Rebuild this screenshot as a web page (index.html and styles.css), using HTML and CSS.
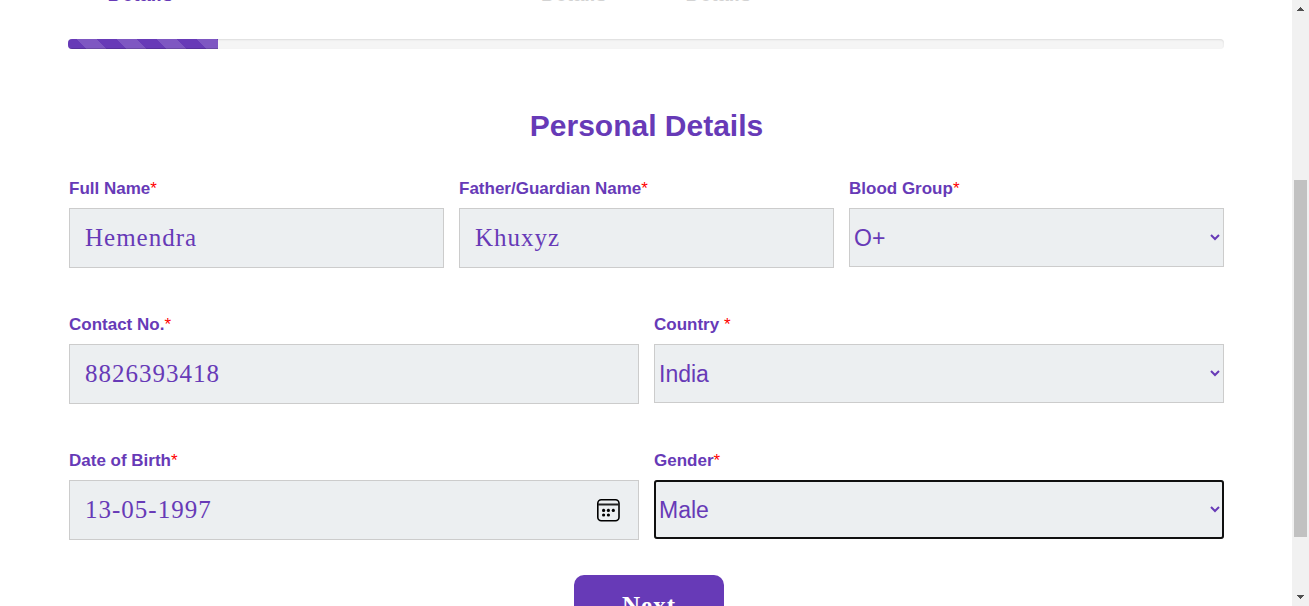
FILE: index.html
```html
<!DOCTYPE html>
<html lang="en">
<head>
<meta charset="utf-8">
<meta name="viewport" content="width=device-width, initial-scale=1">
<title>Personal Details</title>
<link rel="stylesheet" href="styles.css">
</head>
<body>
<div class="viewport">
  <main class="page">
    <ol class="steps">
      <li class="step step-active">Details</li>
      <li class="step"></li>
      <li class="step"></li>
      <li class="step">Details</li>
      <li class="step">Details</li>
      <li class="step"></li>
      <li class="step"></li>
      <li class="step"></li>
    </ol>
    <div class="progress" role="progressbar" aria-label="Form progress" aria-valuenow="13" aria-valuemin="0" aria-valuemax="100">
      <div class="progress-bar" style="width: 13%"></div>
    </div>
    <form class="form">
      <h1 class="title">Personal Details</h1>
      <div class="row row-three">
        <div class="field">
          <label class="label" for="name">Full Name<span class="required">*</span></label>
          <input class="control" id="name" type="text" value="Hemendra">
        </div>
        <div class="field">
          <label class="label" for="guardian">Father/Guardian Name<span class="required">*</span></label>
          <input class="control" id="guardian" type="text" value="Khuxyz">
        </div>
        <div class="field">
          <label class="label" for="blood">Blood Group<span class="required">*</span></label>
          <select class="control select" id="blood"><option>O+</option></select>
        </div>
      </div>
      <div class="row">
        <div class="field">
          <label class="label" for="contact">Contact No.<span class="required">*</span></label>
          <input class="control" id="contact" type="text" value="8826393418">
        </div>
        <div class="field">
          <label class="label" for="country">Country <span class="required">*</span></label>
          <select class="control select" id="country"><option>India</option></select>
        </div>
      </div>
      <div class="row">
        <div class="field">
          <label class="label" for="birth">Date of Birth<span class="required">*</span></label>
          <div class="date">
            <input class="control" id="birth" type="text" value="13-05-1997">
            <button class="picker" type="button" aria-label="Open calendar">
              <svg width="24" height="24" viewBox="0 0 24 24" fill="none" stroke="#000" stroke-width="1.6">
                <rect x="1.8" y="1.8" width="21.2" height="21" rx="3.5"/>
                <path d="M2 6.5h21" stroke="#222" stroke-width="2"/>
                <g fill="#000" stroke="none">
                  <circle cx="7.6" cy="12.4" r="1.6"/><circle cx="12.4" cy="12.4" r="1.6"/><circle cx="17.3" cy="12.4" r="1.6"/>
                  <circle cx="7.6" cy="17" r="1.6"/><circle cx="12.4" cy="17" r="1.6"/>
                </g>
              </svg>
            </button>
          </div>
        </div>
        <div class="field">
          <label class="label" for="gender">Gender<span class="required">*</span></label>
          <select class="control select select-focused" id="gender"><option>Male</option></select>
        </div>
      </div>
      <button class="next" type="button">Next</button>
    </form>
  </main>
  <div class="scrollbar" aria-hidden="true">
    <svg class="arrow" width="7" height="4" viewBox="0 0 7 4" shape-rendering="crispEdges"><path d="M3 0h1v1h1v1h1v1h1v1H0V3h1V2h1V1h1z" fill="#505050"/></svg>
    <div class="track"><div class="thumb"></div></div>
    <svg class="arrow" width="7" height="4" viewBox="0 0 7 4" shape-rendering="crispEdges"><path d="M0 0h7v1H6v1H5v1H4v1H3V3H2V2H1V1H0z" fill="#505050"/></svg>
  </div>
</div>
</body>
</html>
```
FILE: styles.css
```css
* {
  box-sizing: border-box;
}

body {
  margin: 0;
  background: #fff;
  color: #673ab7;
  font-family: "Liberation Sans", Arial, sans-serif;
}

.viewport {
  display: flex;
  height: 100vh;
  overflow: hidden;
}

.page {
  flex: 1;
  min-width: 0;
  padding: 0 68px;
}

/* The step list is scrolled almost out of view. */
.steps {
  display: grid;
  grid-template-columns: repeat(8, 1fr);
  height: 24px;
  margin: -18px 0 33px;
  padding: 0;
  list-style: none;
  font-size: 20px;
  font-weight: bold;
  line-height: 24px;
  text-align: center;
}

.step {
  color: #d3d3d3;
}

.step-active {
  color: #673ab7;
}

.progress {
  height: 10px;
  overflow: hidden;
  border-radius: 4px;
  background: #f5f5f5;
  box-shadow: inset 0 1px 2px rgba(0, 0, 0, 0.1);
}

.progress-bar {
  height: 100%;
  background-color: #673ab7;
  background-image: linear-gradient(45deg, rgba(255, 255, 255, 0.15) 25%, transparent 25%, transparent 50%, rgba(255, 255, 255, 0.15) 50%, rgba(255, 255, 255, 0.15) 75%, transparent 75%, transparent);
  background-position: 9px 0;
  background-size: 40px 40px;
  box-shadow: inset 0 -1px 0 rgba(0, 0, 0, 0.15);
}

.form {
  display: flex;
  flex-direction: column;
  padding-left: 1px;
}

.title {
  margin: 59px 0 35px;
  font-size: 30px;
  line-height: 36px;
  text-align: center;
}

.row {
  display: grid;
  grid-template-columns: 1fr 1fr;
  gap: 15px;
  margin-bottom: 47px;
}

.row-three {
  grid-template-columns: 1fr 1fr 1fr;
}

.row:last-of-type {
  margin-bottom: 35px;
}

.field {
  display: flex;
  flex-direction: column;
  gap: 9px;
  min-width: 0;
}

.label {
  font-size: 17px;
  font-weight: bold;
  line-height: 20px;
}

.required {
  color: #f00;
  font-weight: normal;
}

.control {
  width: 100%;
  height: 60px;
  padding: 0 15px;
  border: 1px solid #ccc;
  border-radius: 0;
  outline: none;
  background-color: #eceff1;
  color: #673ab7;
  font-family: "Liberation Serif", "Times New Roman", serif;
  font-size: 25px;
  letter-spacing: 1px;
}

.select {
  height: 59px;
  padding: 0 1px 0 0;
  font-family: "Liberation Sans", Arial, sans-serif;
  font-size: 23px;
  letter-spacing: normal;
}

.select-focused {
  border-radius: 3px;
  outline: 2px solid #101010;
  outline-offset: -2px;
}

.date {
  position: relative;
}

.picker {
  position: absolute;
  top: 18px;
  right: 19px;
  width: 24px;
  height: 24px;
  padding: 0;
  border: 0;
  background: none;
}

.picker svg {
  display: block;
}

.next {
  align-self: center;
  width: 150px;
  height: 60px;
  margin-left: 5px;
  padding: 2px 0 0;
  border: 0;
  border-radius: 10px;
  background: #673ab7;
  color: #fff;
  font-family: "Liberation Serif", "Times New Roman", serif;
  font-size: 25px;
  font-weight: bold;
  letter-spacing: 1px;
}

.scrollbar {
  display: flex;
  flex-direction: column;
  align-items: center;
  width: 17px;
  padding: 7px 0;
  background: #f1f1f1;
}

.track {
  display: grid;
  flex: 1;
  grid-template-rows: 169fr 357fr 58fr;
}

.thumb {
  grid-row: 2;
  width: 13px;
  background: #c1c1c1;
}
```
